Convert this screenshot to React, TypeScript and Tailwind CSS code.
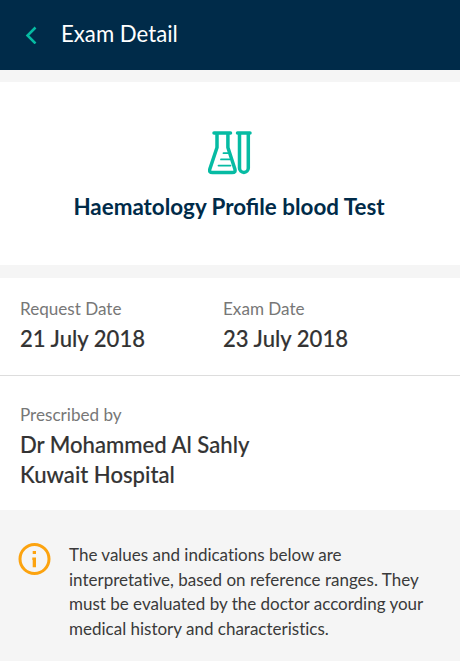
import React from "react";

interface FieldProps {
  label: string;
  lines: string[];
}

const Field: React.FC<FieldProps> = ({ label, lines }) => {
  return (
    <div>
      <p className="mb-[2px] text-[17.1px] leading-[26px] text-[#777777]">
        {label}
      </p>
      {lines.map((line) => (
        <p
          key={line}
          className="text-[22.1px] leading-[29.500px] font-medium text-[#333333] [-webkit-text-stroke:0.15px_#333333]"
        >
          {line}
        </p>
      ))}
    </div>
  );
};

const TestTubesIcon: React.FC = () => {
  return (
    <svg
      width="44"
      height="44"
      viewBox="0 0 44 44"
      fill="none"
      stroke="#06bba3"
      strokeWidth="3.500"
      strokeLinecap="round"
      strokeLinejoin="round"
    >
      <path d="M6 2h16.500M9 2v14.500L2 37.500c-1 3 0 4.100 2.600 4.100h19.500c2.600 0 3.600-1.100 2.600-4.100L19.900 16.500V2" />
      <path d="M29.500 2h12.500M31.500 2v35a4.400 4.400 0 0 0 8.800 0V2" />
      <path d="M15.500 22.200h5M13 28.400h8.500M10.500 34.600h12" strokeWidth="1.800" />
    </svg>
  );
};

const App: React.FC = () => {
  return (
    <div className="flex h-[661px] w-[460px] flex-col overflow-hidden bg-[#f5f5f5] font-['Lato',sans-serif]">
      <header className="flex h-[70px] items-center bg-[#002b49] pl-[25px]">
        <svg
          width="12"
          height="18"
          viewBox="0 0 12 18"
          fill="none"
          stroke="#06bba3"
          strokeWidth="2.500"
        >
          <path d="M10.500 1.500 2.500 9.500l8 8" />
        </svg>
        <h1 className="ml-[24px] pb-[2px] text-[22.2px] text-white">
          Exam Detail
        </h1>
      </header>

      <section className="mt-3 flex h-[183px] flex-col items-center bg-white pt-[49px]">
        <TestTubesIcon />
        <h2 className="mt-[16px] pr-[2px] text-[22.4px] leading-[32px] font-bold text-[#002b49]">
          Haematology Profile blood Test
        </h2>
      </section>

      <section className="mt-[13px] h-[232px] bg-white">
        <div className="flex h-[98px] border-b border-[#dddddd] px-5 pt-[18px]">
          <div className="w-[203px]">
            <Field label="Request Date" lines={["21 July 2018"]} />
          </div>
          <Field label="Exam Date" lines={["23 July 2018"]} />
        </div>
        <div className="px-5 pt-[26px]">
          <Field
            label="Prescribed by"
            lines={["Dr Mohammed Al Sahly", "Kuwait Hospital"]}
          />
        </div>
      </section>

      <section className="flex pt-[33px] pl-[18px]">
        <svg width="33" height="33" viewBox="0 0 33 33" fill="none">
          <circle cx="16.500" cy="16" r="14.500" stroke="#fca30f" strokeWidth="3" />
          <path d="M14.700 8h3.300v3h-3.300zM14.300 14.500h3.700v9.700h-3.300v-7.200h-.4z" fill="#fca30f" />
        </svg>
        <p className="ml-[18px] text-[17px] leading-[24.500px] whitespace-nowrap text-[#3a3a3a] [font-variant-ligatures:none]">
          The values and indications below are
          <br />
          interpretative, based on reference ranges. They
          <br />
          must be evaluated by the doctor according your
          <br />
          medical history and characteristics.
        </p>
      </section>
    </div>
  );
};

export default App;
